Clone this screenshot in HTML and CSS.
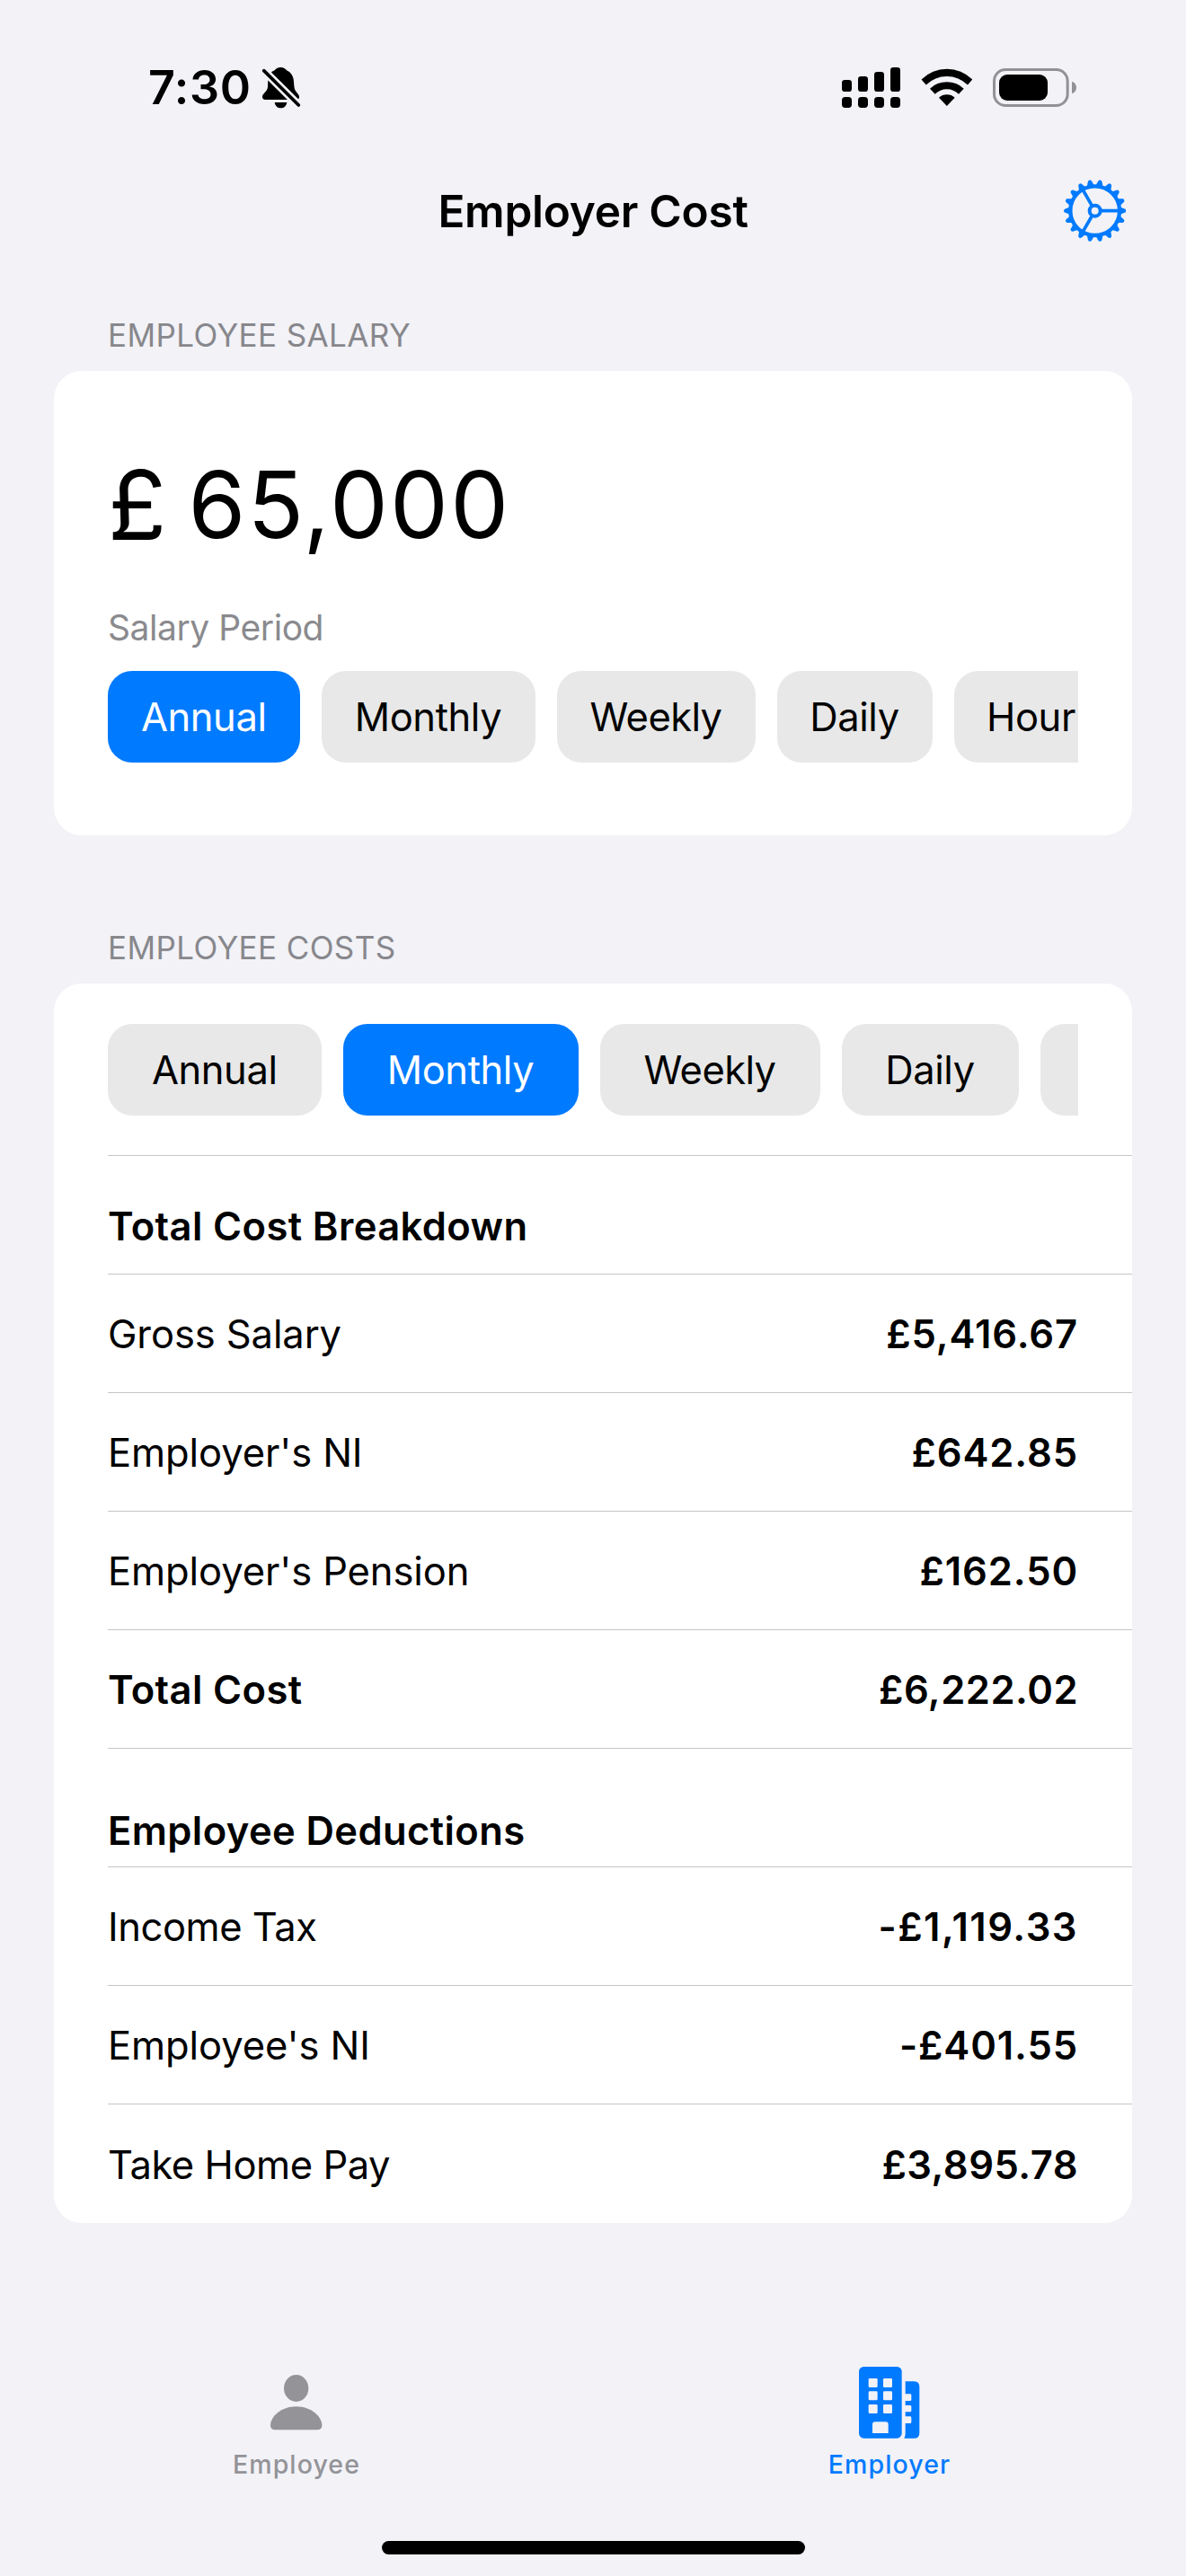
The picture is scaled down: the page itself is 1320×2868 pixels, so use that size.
FILE: index.html
```html
<!DOCTYPE html>
<html lang="en">
<head>
<meta charset="utf-8">
<title>Employer Cost</title>
<link rel="stylesheet" href="styles.css">
</head>
<body>
<div class="screen">
  <header class="status-bar">
    <span class="time">7:30</span>
    <svg class="icon-bell" viewBox="450 70 135 145">
      <path d="M517 76C527 76 533 80 537 86C552 92 560 107 561 124C562 142 563 151 571 160C577 167 580 172 579 177C578 182 574 184 569 184H466C459 184 456 180 456 175C456 163 472 158 474 142C475 134 474 126 475 120C477 103 484 90 497 86C501 80 507 76 517 76Z"/>
      <path d="M497 193H538C536 205 528 212 517.500 212C507 212 499 205 497 193Z"/>
      <path class="slash-gap" d="M450 76L590 215"/>
      <path class="slash" d="M461 87L577 202"/>
    </svg>
    <span class="status-right">
      <svg class="icon-signal" viewBox="111 72 195 135">
        <rect x="111" y="114" width="33" height="39" rx="10"/><rect x="165" y="102" width="33" height="51" rx="10"/><rect x="219" y="87" width="33" height="66" rx="10"/><rect x="273" y="72" width="33" height="81" rx="10"/>
        <rect x="111" y="171" width="33" height="36" rx="11"/><rect x="165" y="171" width="33" height="36" rx="11"/><rect x="219" y="171" width="33" height="36" rx="11"/><rect x="273" y="171" width="33" height="36" rx="11"/>
      </svg>
      <svg class="icon-wifi" viewBox="374 75 173 127">
        <path d="M375.500 112.600A122 125 0 0 1 545.500 112.600L530 130.300A100 100 0 0 0 391 130.300Z"/>
        <path d="M404 143A82 82 0 0 1 517 143L500.100 161.400A56 56 0 0 0 420.900 161.400Z"/>
        <path d="M434 173.400A39 39 0 0 1 487 173.400L460.500 201Z"/>
      </svg>
      <svg class="icon-battery" viewBox="615 75 279 129">
        <rect class="battery-shell" x="619.500" y="79.500" width="245" height="120" rx="38"/>
        <rect x="636" y="96" width="162" height="87" rx="27"/>
        <path class="battery-cap" d="M879 119C888 122 894 130 894 139.500C894 149 888 157 879 160Z"/>
      </svg>
    </span>
  </header>

  <nav class="nav-bar">
    <span></span>
    <h1>Employer Cost</h1>
    <svg class="icon-gear" viewBox="72 62 208 208">
      <defs><path id="tooth" d="M258 153L275 159.500Q280 161 280 166Q280 171 275 172.500L258 179Z"/></defs>
      <circle cx="176" cy="166" r="82" stroke-width="13"/>
      <circle cx="176" cy="166" r="18" stroke-width="12"/>
      <path stroke-width="11" d="M198 166H258M165 147L135 95M165 185L135 237"/>
      <g class="teeth">
        <use href="#tooth"/><use href="#tooth" transform="rotate(20 176 166)"/><use href="#tooth" transform="rotate(40 176 166)"/><use href="#tooth" transform="rotate(60 176 166)"/><use href="#tooth" transform="rotate(80 176 166)"/><use href="#tooth" transform="rotate(100 176 166)"/><use href="#tooth" transform="rotate(120 176 166)"/><use href="#tooth" transform="rotate(140 176 166)"/><use href="#tooth" transform="rotate(160 176 166)"/><use href="#tooth" transform="rotate(180 176 166)"/><use href="#tooth" transform="rotate(200 176 166)"/><use href="#tooth" transform="rotate(220 176 166)"/><use href="#tooth" transform="rotate(240 176 166)"/><use href="#tooth" transform="rotate(260 176 166)"/><use href="#tooth" transform="rotate(280 176 166)"/><use href="#tooth" transform="rotate(300 176 166)"/><use href="#tooth" transform="rotate(320 176 166)"/><use href="#tooth" transform="rotate(340 176 166)"/>
      </g>
    </svg>
  </nav>

  <main>
    <h2 class="section-title">EMPLOYEE SALARY</h2>
    <section class="card salary-card">
      <div class="amount"><span class="currency">£</span><span>65,000</span></div>
      <div class="period-label">Salary Period</div>
      <div class="chips">
        <span class="chip annual selected">Annual</span>
        <span class="chip monthly">Monthly</span>
        <span class="chip weekly">Weekly</span>
        <span class="chip daily">Daily</span>
        <span class="chip hourly">Hourly</span>
      </div>
    </section>

    <h2 class="section-title">EMPLOYEE COSTS</h2>
    <section class="card costs-card">
      <div class="row chips-row">
        <div class="chips wide">
          <span class="chip annual">Annual</span>
          <span class="chip monthly selected">Monthly</span>
          <span class="chip weekly">Weekly</span>
          <span class="chip daily">Daily</span>
          <span class="chip blank"></span>
        </div>
      </div>
      <div class="row heading"><b>Total Cost Breakdown</b></div>
      <div class="row"><span class="loose">Gross Salary</span><b class="value">£5,416.67</b></div>
      <div class="row"><span class="loose">Employer's NI</span><b class="value">£642.85</b></div>
      <div class="row"><span class="loose">Employer's Pension</span><b class="value">£162.50</b></div>
      <div class="row"><b>Total Cost</b><b class="value tight">£6,222.02</b></div>
      <div class="row heading low"><b>Employee Deductions</b></div>
      <div class="row"><span>Income Tax</span><b class="value wide">-£1,119.33</b></div>
      <div class="row"><span class="loose">Employee's NI</span><b class="value">-£401.55</b></div>
      <div class="row"><span>Take Home Pay</span><b class="value tight">£3,895.78</b></div>
    </section>
  </main>

  <footer class="tab-bar">
    <div class="tab">
      <div class="tab-icon">
        <svg class="icon-person" viewBox="243 134 172 184">
          <ellipse cx="329" cy="179" rx="41" ry="45"/>
          <path d="M329 240C379 240 415 274 415 303C415 313 409 318 399 318H259C249 318 243 313 243 303C243 274 279 240 329 240Z"/>
        </svg>
      </div>
      <span>Employee</span>
    </div>
    <div class="tab active">
      <div class="tab-icon">
        <svg class="icon-building" viewBox="166 105 202 239">
          <rect x="166" y="105" width="143" height="239" rx="16"/>
          <path d="M321 154H350Q368 154 368 172V326Q368 344 350 344H317Q321 338 321 328V294H337Q341 294 341 290V275Q341 271 337 271H321V256H337Q341 256 341 252V238Q341 234 337 234H321V219H337Q341 219 341 215V200Q341 196 337 196H321Z"/>
          <g class="cutout">
            <rect x="198" y="144" width="30" height="30" rx="4"/><rect x="247" y="144" width="30" height="30" rx="4"/>
            <rect x="198" y="187" width="30" height="30" rx="4"/><rect x="247" y="187" width="30" height="30" rx="4"/>
            <rect x="198" y="231" width="30" height="30" rx="4"/><rect x="247" y="231" width="30" height="30" rx="4"/>
            <path d="M211 327V298Q211 289 220 289H255Q264 289 264 298V327Z"/>
          </g>
        </svg>
      </div>
      <span>Employer</span>
    </div>
  </footer>
  <div class="home-indicator"></div>
</div>
</body>
</html>
```
FILE: styles.css
```css
:root {
  --bg: #f2f2f7;
  --blue: #007aff;
  --line: #c6c6c8;
}

* { box-sizing: border-box; }

body {
  margin: 0;
  background: var(--bg);
  color: #000;
  font-family: Inter, "Liberation Sans", sans-serif;
  font-size: 43.5px;
}

h1, h2 { margin: 0; }
b { font-weight: 600; letter-spacing: 0.4px; }
svg { display: block; flex: none; }

.screen {
  display: flex;
  flex-direction: column;
  width: 1320px;
  height: 2868px;
  overflow: hidden;
}

/* Status bar */
.status-bar {
  display: flex;
  align-items: center;
  height: 195px;
  padding: 0 122px 0 165px;
}
.time {
  width: 125px;
  font-size: 52px;
  font-weight: 600;
  letter-spacing: 0.6px;
}
.icon-bell { width: 45px; height: 48.33px; }
.slash-gap { stroke: var(--bg); stroke-width: 27; }
.slash { stroke: #000; stroke-width: 11; stroke-linecap: round; }
.status-right { display: flex; align-items: center; margin-left: auto; }
.icon-signal { width: 65px; height: 45px; margin-right: 22.7px; }
.icon-wifi { width: 57.7px; height: 42.3px; margin-right: 22.6px; }
.icon-battery { width: 93px; height: 43px; }
.battery-shell { fill: none; stroke: #929294; stroke-width: 9; }
.battery-cap { fill: #929294; }

/* Navigation bar */
.nav-bar {
  display: grid;
  grid-template-columns: 1fr auto 1fr;
  align-items: center;
  height: 80px;
  padding: 0 66.7px;
}
.nav-bar h1 {
  font-size: 49.5px;
  font-weight: 600;
  letter-spacing: -0.25px;
}
.icon-gear {
  width: 69.33px;
  height: 69.33px;
  justify-self: end;
  fill: none;
  stroke: var(--blue);
}
.teeth { fill: var(--blue); stroke: none; }

/* Sections */
main { padding: 78px 60px 0; }
.section-title {
  height: 60px;
  padding-left: 60px;
  line-height: 40px;
  font-size: 35px;
  font-weight: 400;
  letter-spacing: 0.4px;
  color: #87878c;
}
.card {
  background: #fff;
  border-radius: 31px;
}
.salary-card {
  height: 517px;
  margin-bottom: 105px;
  padding: 89px 60px 0;
}
.amount {
  display: flex;
  height: 120px;
  line-height: 120px;
  font-size: 103px;
  letter-spacing: 2.2px;
}
.currency { width: 89.5px; font-size: 107px; }
.period-label {
  height: 125px;
  padding-top: 52px;
  line-height: 50px;
  font-size: 39px;
  letter-spacing: -0.45px;
  color: #8a8a8e;
}

/* Period chips */
.chips {
  --pad: 36px;
  display: flex;
  gap: 24px;
  width: 1080px;
  overflow: hidden;
}
.chips.wide { --pad: 48px; }
.chip {
  flex: none;
  width: calc(var(--w) + 2 * var(--pad));
  height: 102px;
  border-radius: 27px;
  background: #e8e8e8;
  line-height: 102px;
  text-align: center;
  letter-spacing: -0.4px;
}
.chip.selected { background: var(--blue); color: #fff; }
.annual { --w: 141.5px; }
.monthly { --w: 166px; }
.weekly { --w: 149px; letter-spacing: -0.6px; }
.daily { --w: 101px; }
.hourly { --w: 135px; }
.blank { --w: 135px; }

/* Cost rows */
.costs-card { padding-left: 60px; }
.row {
  display: flex;
  justify-content: space-between;
  align-items: center;
  height: 132px;
  padding: 1px 60px 0 0;
  border-bottom: 1px solid var(--line);
  letter-spacing: -0.45px;
}
.row:last-child { border-bottom: 0; }
.chips-row { height: 192px; padding-top: 0; }
.heading { padding-top: 25px; }
.heading.low { padding-top: 50px; }
.loose { letter-spacing: -0.1px; }
.value { letter-spacing: 0.9px; }
.value.tight { letter-spacing: 0.5px; }
.value.wide { letter-spacing: 1.5px; }

/* Tab bar */
.tab-bar {
  display: flex;
  margin-top: 150px;
  height: 204px;
}
.tab {
  flex: 1;
  display: flex;
  flex-direction: column;
  align-items: center;
  color: #939398;
  font-size: 28.5px;
  font-weight: 500;
  letter-spacing: 1.1px;
  line-height: 38px;
}
.tab.active { color: var(--blue); }
.tab-icon {
  display: flex;
  align-items: center;
  height: 100px;
  fill: currentColor;
}
.icon-person { width: 57.33px; height: 61.33px; }
.icon-building { width: 67.33px; height: 79.67px; }
.cutout { fill: var(--bg); }

.home-indicator {
  align-self: center;
  width: 471px;
  height: 15px;
  border-radius: 8px;
  background: #000;
}
```
